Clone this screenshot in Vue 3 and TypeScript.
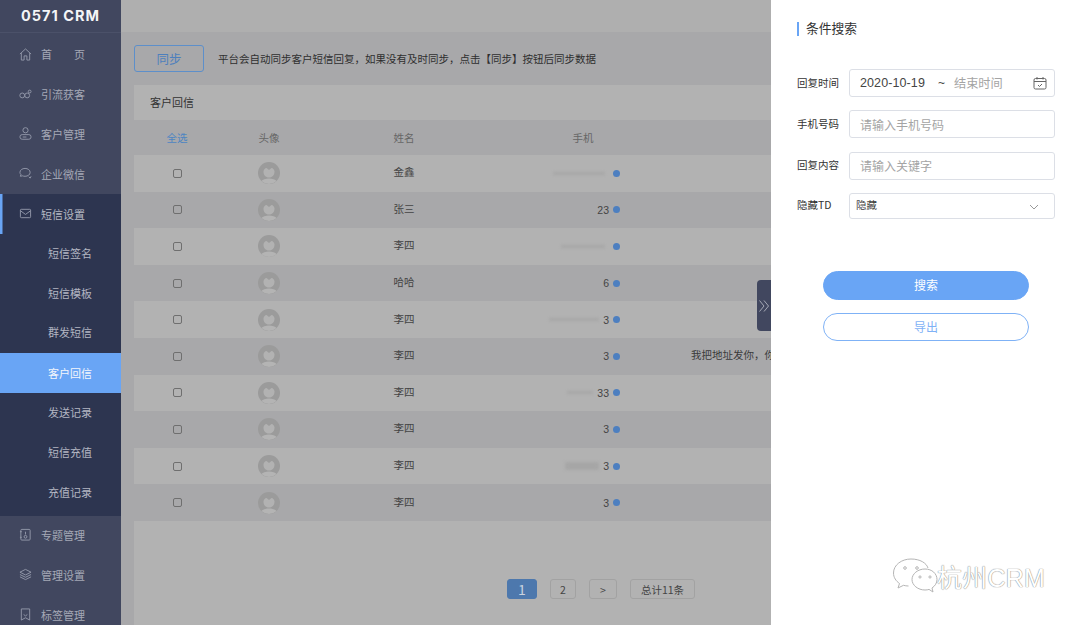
<script setup lang="ts">
interface Row { name: string; phone: string; smear: number; thick?: boolean; msg?: string }
const topItems = [
  { label: '首　　页', icon: 'home' },
  { label: '引流获客', icon: 'flow' },
  { label: '客户管理', icon: 'user' },
  { label: '企业微信', icon: 'chat' },
]
const subItems = ['短信签名', '短信模板', '群发短信', '客户回信', '发送记录', '短信充值', '充值记录']
const bottomItems = [
  { label: '专题管理', icon: 'topic' },
  { label: '管理设置', icon: 'layers' },
  { label: '标签管理', icon: 'tag' },
]
const rows: Row[] = [
  { name: '金鑫', phone: '', smear: 52 },
  { name: '张三', phone: '23', smear: 0 },
  { name: '李四', phone: '', smear: 44 },
  { name: '哈哈', phone: '6', smear: 0 },
  { name: '李四', phone: '3', smear: 50 },
  { name: '李四', phone: '3', smear: 0, msg: '我把地址发你，你' },
  { name: '李四', phone: '33', smear: 26 },
  { name: '李四', phone: '3', smear: 0 },
  { name: '李四', phone: '3', smear: 34, thick: true },
  { name: '李四', phone: '3', smear: 0 },
]
</script>

<template>
  <div class="page">
    <aside class="side">
      <div class="logo">0571 CRM</div>
      <nav class="nav">
        <div v-for="it in topItems" :key="it.label" class="item">
          <svg class="ico" viewBox="0 0 14 14">
            <path v-if="it.icon === 'home'" d="M1 6.500 7 1l6 5.500M2.500 5.500V13h3V8.500h3V13h3V5.500" />
            <g v-else-if="it.icon === 'flow'"><circle cx="3.500" cy="8" r="2.600" /><circle cx="8.800" cy="8" r="2.600" /><circle cx="11.500" cy="3.800" r="1.500" /></g>
            <g v-else-if="it.icon === 'user'"><circle cx="7" cy="3.500" r="2.800" /><rect x="1" y="8.200" width="12" height="5" rx="2.400" /><path d="M4 10.800h4" /></g>
            <path v-else d="M6.500 1.500c3 0 5.500 1.800 5.500 4.300 0 2.500-2.500 4.200-5.500 4.200-1 0-2-.2-2.800-.5L1.500 10l.6-2C1.300 7.400 1 6.600 1 5.800 1 3.300 3.500 1.500 6.500 1.500ZM10.500 10.500l1.500 1.500 1-2" />
          </svg>
          <span>{{ it.label }}</span>
        </div>
        <div class="group">
          <div class="item group-head">
            <svg class="ico" viewBox="0 0 14 14"><rect x="1.500" y="2.500" width="11" height="9" rx="1" /><path d="m1.500 4 5.500 4 5.500-4" /></svg>
            <span>短信设置</span>
          </div>
          <div v-for="s in subItems" :key="s" class="sub" :class="{ on: s === '客户回信' }">{{ s }}</div>
        </div>
        <div v-for="it in bottomItems" :key="it.label" class="item">
          <svg class="ico" viewBox="0 0 14 14">
            <g v-if="it.icon === 'topic'"><rect x="2" y="1.500" width="10" height="11.500" rx="1" /><path d="M7 4v3M5.500 9.500a1.500 1.500 0 1 0 3 0 1.500 1.500 0 0 0-3 0M1 4h2M1 10h2" /></g>
            <path v-else-if="it.icon === 'layers'" d="M7 1.500 13 4.500 7 7.500 1 4.500ZM1 7l6 3 6-3M1 9.500l6 3 6-3" />
            <path v-else d="M2.500 1h9v12L7 10.500 2.500 13ZM5 7l2 1.500L9 7" />
          </svg>
          <span>{{ it.label }}</span>
        </div>
      </nav>
    </aside>

    <main class="main">
      <div class="topbar"></div>
      <div class="sync">
        <button class="sync-btn">同步</button>
        <p class="sync-tip">平台会自动同步客户短信回复，如果没有及时同步，点击【同步】按钮后同步数据</p>
      </div>
      <section class="card">
        <h2 class="card-title">客户回信</h2>
        <div class="row head">
          <span class="all">全选</span><span>头像</span><span>姓名</span><span>手机</span><span></span>
        </div>
        <div v-for="(r, i) in rows" :key="i" class="row body" :class="{ odd: i % 2 === 1 }">
          <span class="cell"><i class="check"></i></span>
          <span class="cell">
            <svg class="avatar" viewBox="0 0 22 22">
              <circle cx="11" cy="11" r="11" fill="#9b9b9b" />
              <path d="M5.500 9.500c0-1.500 1.500-3.500 3-3.500L11 8l2.500-2c1.500 0 3 2 3 3.500 0 3.500-2 6-5.500 6s-5.500-2.500-5.500-6Z" fill="#b2b2b2" />
              <path d="M3.500 19c2-3.500 13-3.500 15 0a11 11 0 0 1-15 0Z" fill="#b4b4b4" />
            </svg>
          </span>
          <span class="cell name">{{ r.name }}</span>
          <span class="phone">
            <i v-if="r.smear" class="smear" :class="{ thick: r.thick }" :style="{ width: r.smear + 'px' }"></i>
            <span class="num">{{ r.phone }}</span>
            <i class="dot"></i>
          </span>
          <span class="msg">{{ r.msg }}</span>
        </div>
        <div class="pager">
          <span class="pg cur">1</span>
          <span class="pg two">2</span>
          <span class="pg next">&gt;</span>
          <span class="pg total">总计11条</span>
        </div>
      </section>
    </main>

    <aside class="panel">
      <button class="handle" aria-label="收起">
        <svg viewBox="0 0 12 14" width="12" height="14"><path d="M1.500 1.500 6 7l-4.500 5.500M6 1.500 10.500 7 6 12.500" /></svg>
      </button>
      <h3 class="panel-title">条件搜索</h3>
      <div class="form">
        <label class="fl tall">
          <span class="lb">回复时间</span>
          <span class="box date">
            <span class="val">2020-10-19</span><span class="tilde">~</span><span class="ph end">结束时间</span>
            <svg class="cal" viewBox="0 0 14 14"><rect x="1" y="2.500" width="12" height="10.500" rx="1.500" /><path d="M1 5.500h12M4 1v2.500M10 1v2.500M5 9l1.500 1.500L9 8" /></svg>
          </span>
        </label>
        <label class="fl tall"><span class="lb">手机号码</span><span class="box ph">请输入手机号码</span></label>
        <label class="fl tall"><span class="lb">回复内容</span><span class="box ph">请输入关键字</span></label>
        <label class="fl short">
          <span class="lb">隐藏TD</span>
          <span class="box sel">隐藏
            <svg class="chev" viewBox="0 0 10 6"><path d="m1 1 4 4 4-4" /></svg>
          </span>
        </label>
      </div>
      <div class="actions">
        <button class="btn fill">搜索</button>
        <button class="btn line">导出</button>
      </div>
      <div class="mark">
        <svg class="wx" viewBox="0 0 46 36">
          <path d="M19 1C9.500 1 1.500 7 1.500 15c0 4.500 2.500 8 6 10.500L6 30l5.500-2.700c1.500.4 3 .7 5 .7" />
          <path d="M33 11c-7 0-13 4.700-13 10.500S26 32 33 32c1.500 0 3-.2 4-.6l4 2.600-1-4c3-2 5-5 5-8.500C45 15.700 40 11 33 11Z" />
          <path d="M36 10C34.500 5 28 1 19 1" />
          <circle cx="13" cy="10" r="1.300" /><circle cx="25" cy="10" r="1.300" /><circle cx="28" cy="19" r="1.100" /><circle cx="38" cy="19" r="1.100" />
        </svg>
        <span>杭州CRM</span>
      </div>
    </aside>
  </div>
</template>

<style>
html, body { margin: 0; padding: 0; }
</style>

<style scoped>
.page {
  width: 1080px; height: 625px; display: flex; overflow: hidden; position: relative;
  font-family: "Noto Sans CJK SC", "Liberation Sans", sans-serif; font-size: 11px; background: #a8a8aa;
}
.side { width: 121px; flex: none; background: #41475f; color: #a5a9b6; }
.logo {
  height: 30px; border-bottom: 1px solid #4b5169; display: flex; align-items: center; justify-content: center;
  font-family: "Inter", "Liberation Sans", sans-serif; font-weight: 700; font-size: 14.500px; letter-spacing: 1px; color: #f4f5f7;
  padding-bottom: 2px; white-space: pre;
}
.nav { display: flex; flex-direction: column; padding-top: 2px; }
.item { height: 39.800px; flex: none; display: flex; align-items: center; padding-left: 19px; gap: 9px; box-sizing: border-box; padding-bottom: 1px; }
.ico { width: 13px; height: 13px; flex: none; fill: none; stroke: #9499ab; stroke-width: 1; }
.group { background: #2d3550; padding-bottom: 3px; }
.group-head { box-shadow: inset 2.500px 0 0 #69a5f5; color: #b6b9c4; }
.sub { height: 39.800px; box-sizing: border-box; padding-bottom: 2px; display: flex; align-items: center; padding-left: 48px; color: #b3b6c2; }
.sub.on { background: #69a5f5; color: #f3f6fb; padding-bottom: 1px; }

.main { flex: 1; min-width: 0; overflow: hidden; }
.topbar { height: 32px; background: #afafaf; }
.sync { display: flex; align-items: center; height: 53px; padding-left: 13px; gap: 14px; }
.sync-btn {
  width: 70px; height: 27px; border: 1px solid #5d8fca; border-radius: 3px; background: transparent;
  color: #4d7fbd; font: 12.500px "Noto Sans CJK SC", sans-serif; padding: 0;
}
.sync-tip { margin: 0; font-size: 10.500px; color: #2f2f2f; white-space: nowrap; }
.card { margin-left: 13px; width: 680px; height: 540px; background: #b2b2b2; position: relative; }
.card-title { margin: 0; height: 35px; padding-left: 16px; padding-bottom: 1px; box-sizing: border-box; display: flex; align-items: center; font-weight: 400; font-size: 11px; color: #333; }
.row { display: grid; grid-template-columns: 86px 98px 172px 186px 1fr; align-items: center; text-align: center; }
.head { height: 35px; background: #a8a8aa; color: #666; font-size: 10.500px; }
.all { color: #4d85c2; }
.body { height: 36.600px; background: #b2b2b2; color: #444; font-size: 10.500px; }
.body.odd { background: #a8a8aa; }
.cell { display: flex; align-items: center; justify-content: center; }
.name { font-size: 10.500px; padding-bottom: 3px; }
.check { width: 7px; height: 7px; border: 1px solid #6f6f6f; border-radius: 2px; display: block; }
.avatar { width: 22px; height: 22px; display: block; }
.phone { display: flex; align-items: center; justify-content: flex-end; padding-right: 56px; gap: 4px; font-family: "Liberation Sans", sans-serif; color: #444; }
.smear { height: 3px; background: #a6a6a6; border-radius: 2px; filter: blur(1.500px); display: block; }
.smear.thick { height: 8px; }
.dot { width: 7px; height: 7px; border-radius: 50%; background: #4d7fc0; display: block; }
.msg { text-align: left; padding-left: 15px; padding-bottom: 3px; white-space: nowrap; color: #3a3a3a; }
.pager { position: absolute; left: 373px; top: 494px; display: flex; gap: 13px; }
.pg { height: 18px; border: 1px solid #a2a2a2; border-radius: 3px; display: flex; align-items: center; justify-content: center; color: #444; font-size: 10.500px; }
.cur { width: 28px; background: #4d78ad; border-color: #4d78ad; color: #c9d3df; font-size: 14px; }
.two { width: 24px; }
.next { width: 26px; }
.total { width: 63px; }

.panel { width: 309px; flex: none; background: #fff; position: relative; box-sizing: border-box; padding: 22px 25px 0 26px; color: #333; }
.handle {
  position: absolute; left: -14px; top: 280px; width: 14px; height: 51px; border: 0; padding: 0; border-radius: 4px 0 0 4px;
  background: #41475f; display: flex; align-items: center; justify-content: center;
}
.handle svg { fill: none; stroke: #a5a9b6; stroke-width: 1; }
.panel-title { margin: 0; height: 14px; line-height: 12px; border-left: 2px solid #69a5f5; padding-left: 7px; font-weight: 400; font-size: 12.750px; color: #333; }
.form { margin-top: 33px; display: flex; flex-direction: column; gap: 13.330px; }
.fl { display: flex; align-items: center; gap: 10px; }
.lb { width: 42px; flex: none; font-size: 10.500px; color: #333; white-space: nowrap; padding-bottom: 2px; }
.box { flex: 1; box-sizing: border-box; border: 1px solid #dcdfe6; border-radius: 3px; display: flex; align-items: center; padding-left: 10px; font-size: 12px; }
.tall .box { height: 28px; }
.short .box { height: 26px; padding-bottom: 2px; }
.ph { color: #a4a4a4; }
.date { position: relative; }
.val { font-family: "Liberation Sans", sans-serif; font-size: 12.500px; letter-spacing: .1px; color: #444; }
.tilde { margin-left: 13px; margin-right: 9px; font-family: "Liberation Sans", sans-serif; color: #444; }
.end { font-size: 12.200px; }
.cal { position: absolute; right: 7px; top: 6px; width: 14px; height: 14px; fill: none; stroke: #666; stroke-width: 1; }
.sel { padding-left: 6px; font-size: 10.500px; color: #444; position: relative; }
.chev { position: absolute; right: 15px; top: 10px; width: 10px; height: 6px; fill: none; stroke: #999; stroke-width: 1; }
.actions { margin-top: 52px; margin-left: 26px; display: flex; flex-direction: column; gap: 13px; width: 206px; }
.btn { height: 29px; border-radius: 15px; font: 12px "Noto Sans CJK SC", sans-serif; padding: 0 0 1px; }
.fill { background: #69a5f5; border: 1px solid #69a5f5; color: #fff; }
.line { height: 28px; background: #fff; border: 1px solid #7fb2f6; color: #7fb2f6; padding: 0; }
.mark {
  position: absolute; left: 121px; top: 558px; display: flex; align-items: center; color: #fff;
  font-size: 25px; letter-spacing: .2px; text-shadow: 0 0 1px #8a8a8a, 0 0 1px #8a8a8a;
  font-family: "Liberation Sans", "Noto Sans CJK SC", sans-serif;
}
.wx { width: 46px; height: 36px; fill: none; stroke: #b5b5b5; stroke-width: 1; margin-right: -1px; flex: none; }
</style>
